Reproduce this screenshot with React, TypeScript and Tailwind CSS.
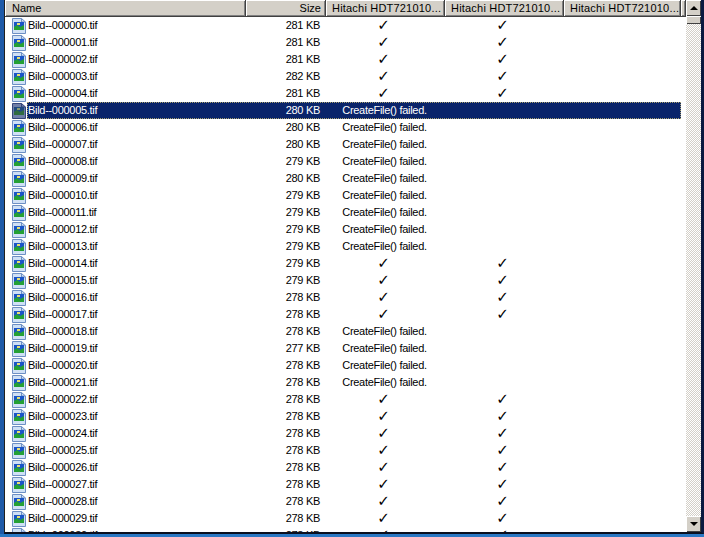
const Icon = ({ selected }: { selected: boolean }) => (
  <svg width="15" height="16" viewBox="0 0 15 16" className="shrink-0 relative">
    <path d="M0.5 0.5H9.5L13.5 4V15.5H0.5Z" fill={selected ? "#6f7fa8" : "#cfe0f5"} stroke={selected ? "#33457a" : "#6d8fc4"} />
    <path d="M9.5 0.5V4H13.5" fill="none" stroke={selected ? "#33457a" : "#6d8fc4"} />
    <rect x="2" y="4" width="10" height="8" fill={selected ? "#1f4a80" : "#1a55c8"} />
    <path d="M2 12V9L5 7L8 9L12 7V12Z" fill={selected ? "#2f6b40" : "#24a035"} />
    <rect x="5" y="5" width="3" height="2" fill={selected ? "#8a9a70" : "#e8e070"} />
  </svg>
);

const rows: [string, string, boolean][] = [
  ["000000", "281", true], ["000001", "281", true], ["000002", "281", true], ["000003", "282", true],
  ["000004", "281", true], ["000005", "280", false], ["000006", "280", false], ["000007", "280", false],
  ["000008", "279", false], ["000009", "280", false], ["000010", "279", false], ["000011", "279", false],
  ["000012", "279", false], ["000013", "279", false], ["000014", "279", true], ["000015", "279", true],
  ["000016", "278", true], ["000017", "278", true], ["000018", "278", false], ["000019", "277", false],
  ["000020", "278", false], ["000021", "278", false], ["000022", "278", true], ["000023", "278", true],
  ["000024", "278", true], ["000025", "278", true], ["000026", "278", true], ["000027", "278", true],
  ["000028", "278", true], ["000029", "278", true], ["000030", "278", true],
];

const headerCell = "h-[17px] shrink-0 bg-[#d4d0c8] border-r border-b border-r-[#404040] border-b-[#404040] shadow-[inset_1px_1px_0_#ffffff,inset_-1px_-1px_0_#808080] flex items-center text-[11px] leading-none text-black whitespace-nowrap overflow-hidden";
const hitachi = "tracking-[0.2px]";
const check = <span className="mr-[2px] font-['DejaVu_Sans'] text-[15px] font-bold leading-none">✓</span>;

export default function App() {
  return (
    <div className="w-[704px] h-[537px] bg-[#2a78c4] overflow-hidden font-['Liberation_Sans',sans-serif]">
      <div className="h-[534px] flex">
        <div className="w-[4px] shrink-0 bg-[#1f5aa8]" />
        <div className="flex-1 min-w-0 bg-white border-l border-b-2 border-r-[3px] border-l-[#202020] border-b-[#0a1020] border-r-[#0a1a40] flex overflow-hidden">
          <div className="w-[681px] shrink-0 flex flex-col overflow-hidden">
            <div className="flex shrink-0">
              <div className={`${headerCell} w-[241px] pl-[7px]`}>Name</div>
              <div className={`${headerCell} w-[80px] justify-end pr-[4px]`}>Size</div>
              <div className={`${headerCell} w-[119px] pl-[6px] ${hitachi}`}>Hitachi HDT721010...</div>
              <div className={`${headerCell} w-[119px] pl-[6px] ${hitachi}`}>Hitachi HDT721010...</div>
              <div className={`${headerCell} w-[117px] pl-[6px] ${hitachi}`}>Hitachi HDT721010...</div>
              <div className={`${headerCell} w-[5px]`} />
            </div>
            <div className="flex flex-col">
              {rows.map(([n, s, ok]) => {
                const sel = n === "000005";
                return (
                  <div key={n} className={`relative flex h-[17px] shrink-0 text-[11px] tracking-[-0.3px] leading-none items-center whitespace-nowrap ${sel ? "text-white" : "text-black"}`}>
                    {sel && <div className="absolute left-[22px] w-[654px] top-0 bottom-0 bg-[#0a246a] outline-1 -outline-offset-1 outline-dotted outline-[#a8a070]" />}
                    <div className="relative w-[241px] shrink-0 flex items-center pl-[7px]">
                      <Icon selected={sel} />
                      <span className="pl-[1px]">{`Bild--${n}.tif`}</span>
                    </div>
                    <div className="relative w-[80px] shrink-0 text-right pr-[6px]">{s} KB</div>
                    <div className="relative w-[119px] shrink-0 text-center pr-[2px]">{ok ? check : "CreateFile() failed."}</div>
                    <div className="relative w-[119px] shrink-0 text-center pr-[2px]">{ok ? check : ""}</div>
                  </div>
                );
              })}
            </div>
          </div>
          <div className="w-[15px] shrink-0 ml-auto flex flex-col bg-[repeating-conic-gradient(#d4d0c8_0%_25%,#ffffff_0%_50%)] bg-[length:2px_2px]">
            <div className="h-[16px] bg-[#d4d0c8] shadow-[inset_1px_1px_0_#ffffff,inset_-1px_-1px_0_#404040] flex items-center justify-center">
              <div className="w-0 h-0 border-x-[4px] border-x-transparent border-b-[4px] border-b-black" />
            </div>
            <div className="h-[8px] bg-[#d4d0c8] shadow-[inset_1px_1px_0_#ffffff,inset_-1px_-1px_0_#404040]" />
            <div className="flex-1" />
            <div className="h-[16px] bg-[#d4d0c8] shadow-[inset_1px_1px_0_#ffffff,inset_-1px_-1px_0_#404040] flex items-center justify-center">
              <div className="w-0 h-0 border-x-[4px] border-x-transparent border-t-[4px] border-t-black" />
            </div>
          </div>
        </div>
      </div>
    </div>
  );
}
